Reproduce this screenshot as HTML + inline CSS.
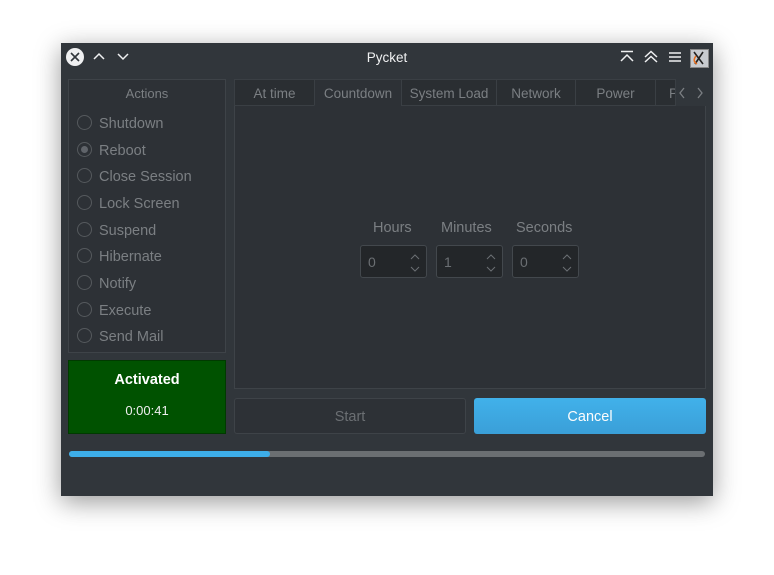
<!DOCTYPE html><html><head><style>
body{margin:0;width:774px;height:575px;background:#fff;font-family:"Liberation Sans","DejaVu Sans",sans-serif;position:relative;overflow:hidden}
.a{position:absolute}
#win{left:61px;top:43px;width:652px;height:453px;background:#31363b;box-shadow:0 6px 24px rgba(0,0,0,.4)}
.t{color:#7b7f83;font-size:14.5px;position:absolute;white-space:nowrap}
.rad{position:absolute;left:77px;width:15px;height:15px;border:1px solid #55595d;border-radius:50%;box-sizing:border-box}
.tab{position:absolute;top:79px;height:27px;background:#2a2e32;border:1px solid #3a3f44;box-sizing:border-box;color:#7b7f83;font-size:13.5px;text-align:center;line-height:28px}
.spin{position:absolute;top:245px;width:67px;height:33px;background:#232629;border:1px solid #43484d;border-radius:3px;box-sizing:border-box;color:#6b6f73;font-size:14px;line-height:33px;padding-left:7px}
.spin svg{position:absolute;right:5px;top:7px}
</style></head><body>
<div id="win" class="a"></div>
<div class="a" style="left:61px;top:43px;width:652px;height:29px;background:#31363b"></div>
<div class="a" style="left:66px;top:48px;width:18px;height:18px;border-radius:50%;background:#eff0f1"></div>
<svg class="a" style="left:66px;top:48px" width="18" height="18"><path d="M5 5L13 13M13 5L5 13" stroke="#31363b" stroke-width="1.6"/></svg>
<svg class="a" style="left:92px;top:52px" width="14" height="10"><path d="M2 7L7 2L12 7" stroke="#eff0f1" stroke-width="1.5" fill="none"/></svg>
<svg class="a" style="left:116px;top:52px" width="14" height="10"><path d="M2 2L7 7L12 2" stroke="#eff0f1" stroke-width="1.5" fill="none"/></svg>
<div class="a" style="left:0;width:774px;top:50px;text-align:center;color:#eff0f1;font-size:13.5px">Pycket</div>
<svg class="a" style="left:619px;top:50px" width="16" height="14"><path d="M2 1.5H14M2 11L8 5L14 11" stroke="#eff0f1" stroke-width="1.5" fill="none"/></svg>
<svg class="a" style="left:643px;top:50px" width="16" height="14"><path d="M2 7L8 1.5L14 7M2 12L8 6.5L14 12" stroke="#eff0f1" stroke-width="1.5" fill="none"/></svg>
<svg class="a" style="left:668px;top:51px" width="14" height="12"><path d="M1 2H13M1 6H13M1 10H13" stroke="#eff0f1" stroke-width="1.6"/></svg>
<div class="a" style="left:690px;top:49px;width:17px;height:17px;background:#c8cbcf;border:1px solid #888"></div>
<svg class="a" style="left:690px;top:49px" width="18" height="18"><path d="M4 3L13 15M13 3L5 15" stroke="#222" stroke-width="1.6"/><path d="M6 7Q2 12 7 15" stroke="#e87020" stroke-width="1.5" fill="none"/></svg>

<div class="a" style="left:68px;top:79px;width:158px;height:274px;border:1px solid #3e4348;background:#2d3136;box-sizing:border-box"></div>
<div class="t" style="left:68px;width:158px;text-align:center;top:86px;font-size:13px">Actions</div>
<div class="rad" style="top:115px"></div><div class="t" style="left:99px;top:116px">Shutdown</div>
<div class="rad" style="top:142px"></div><div class="a" style="left:81px;top:146px;width:7px;height:7px;border-radius:50%;background:#60646a"></div><div class="t" style="left:99px;top:143px">Reboot</div>
<div class="rad" style="top:168px"></div><div class="t" style="left:99px;top:169px">Close Session</div>
<div class="rad" style="top:195px"></div><div class="t" style="left:99px;top:196px">Lock Screen</div>
<div class="rad" style="top:222px"></div><div class="t" style="left:99px;top:223px">Suspend</div>
<div class="rad" style="top:248px"></div><div class="t" style="left:99px;top:249px">Hibernate</div>
<div class="rad" style="top:275px"></div><div class="t" style="left:99px;top:276px">Notify</div>
<div class="rad" style="top:302px"></div><div class="t" style="left:99px;top:303px">Execute</div>
<div class="rad" style="top:328px"></div><div class="t" style="left:99px;top:329px">Send Mail</div>

<div class="a" style="left:68px;top:360px;width:158px;height:74px;background:#005200;border:1px solid #003a00;box-sizing:border-box"></div>
<div class="a" style="left:68px;width:158px;text-align:center;top:372px;color:#fff;font-size:14.5px;font-weight:bold">Activated</div>
<div class="a" style="left:68px;width:158px;text-align:center;top:403px;color:#eee;font-size:13px">0:00:41</div>

<div class="a" style="left:234px;top:105px;width:472px;height:284px;border:1px solid #3e4348;background:#2d3136;box-sizing:border-box"></div>
<div class="tab" style="left:234px;width:81px">At time</div>
<div class="tab" style="left:314px;width:88px;background:#2d3136;border-bottom-color:#2d3136">Countdown</div>
<div class="tab" style="left:401px;width:96px">System Load</div>
<div class="tab" style="left:496px;width:80px">Network</div>
<div class="tab" style="left:575px;width:81px">Power</div>
<div class="tab" style="left:655px;width:21px;text-align:left;padding-left:13px;overflow:hidden">P</div>
<div class="a" style="left:676px;top:79px;width:30px;height:27px;background:#31363b"></div>
<svg class="a" style="left:678px;top:86px" width="28" height="14"><path d="M6 2L2 7L6 12M20 2L24 7L20 12" stroke="#7b7f83" stroke-width="1.3" fill="none"/></svg>

<div class="t" style="left:373px;top:220px">Hours</div>
<div class="t" style="left:441px;top:220px">Minutes</div>
<div class="t" style="left:516px;top:220px">Seconds</div>
<div class="spin" style="left:360px">0<svg width="12" height="20"><path d="M2 6L6 2L10 6M2 14L6 18L10 14" stroke="#6b6f73" fill="none"/></svg></div>
<div class="spin" style="left:436px">1<svg width="12" height="20"><path d="M2 6L6 2L10 6M2 14L6 18L10 14" stroke="#6b6f73" fill="none"/></svg></div>
<div class="spin" style="left:512px">0<svg width="12" height="20"><path d="M2 6L6 2L10 6M2 14L6 18L10 14" stroke="#6b6f73" fill="none"/></svg></div>

<div class="a" style="left:234px;top:398px;width:232px;height:36px;border:1px solid #3e4348;border-radius:3px;background:#2d3136;box-sizing:border-box;color:#6b6f73;font-size:14.5px;text-align:center;line-height:36px">Start</div>
<div class="a" style="left:474px;top:398px;width:232px;height:36px;border-radius:3px;background:linear-gradient(#41b1ea,#3a9fd8);color:#fcfcfc;font-size:14.5px;text-align:center;line-height:38px">Cancel</div>

<div class="a" style="left:69px;top:451px;width:636px;height:6px;border-radius:3px;background:#6b6f72"></div>
<div class="a" style="left:69px;top:451px;width:201px;height:6px;border-radius:3px;background:#3daee9"></div>
</body></html>
